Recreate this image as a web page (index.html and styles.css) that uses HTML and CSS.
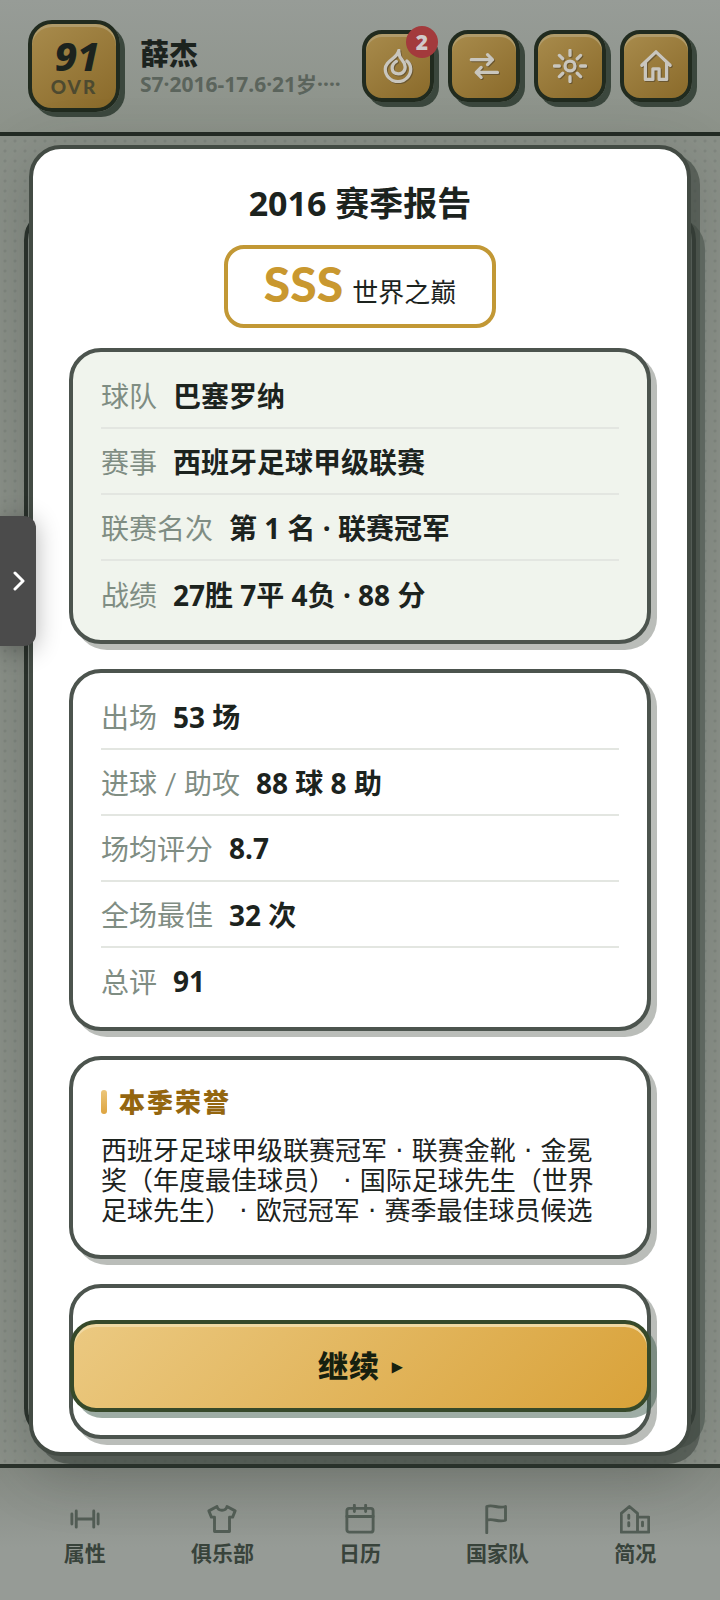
FILE: index.html
```html
<!DOCTYPE html>
<html lang="zh-CN">
<head>
  <meta charset="UTF-8" />
  <meta name="viewport" content="width=device-width, initial-scale=1.0"/>
  <title>赛季报告</title>
  <link rel="stylesheet" href="styles.css">
</head>
<body>
  <header class="topbar">
    <div class="ovr">
      <strong>91</strong>
      <span>OVR</span>
    </div>
    <div class="player">
      <h1>薛杰</h1>
      <p>S7·2016-17.6·21岁····</p>
    </div>
    <div class="actions">
      <button class="icon-btn" type="button" aria-label="热门">
        <svg viewBox="0 0 24 24"><path d="M18.300 8.500C20 10 21 12 21 14.200a9 8.800 0 0 1-18 0C3 8 11.500 7 12.600 1C12.300 4.500 13.500 6.300 15.200 8.200C18.500 12 17.200 17.500 12.200 17.500C7 17.500 6.500 11.500 10.800 8.800"/></svg>
        <span class="badge">2</span>
      </button>
      <button class="icon-btn" type="button" aria-label="转会">
        <svg viewBox="0 0 24 24"><path d="M3 7.500h15M14.500 4l3.500 3.500-3.500 3.500M21.500 16.500H6.500M10 13l-3.500 3.500L10 20"/></svg>
      </button>
      <button class="icon-btn" type="button" aria-label="主题">
        <svg viewBox="0 0 24 24"><circle cx="12" cy="12" r="3.500"/><path d="M12 1v3.500M12 19.500V23M1 12h3.500M19.500 12H23M4.500 4.500l2.400 2.400M17.100 17.100l2.400 2.400M4.500 19.500l2.400-2.400M17.100 6.900l2.400-2.400"/></svg>
      </button>
      <button class="icon-btn" type="button" aria-label="首页">
        <svg viewBox="0 0 24 24"><path d="M2 11.500L12 2l10 9.500M4.500 9.500V21.500h5.300V14h4.400v7.500h5.300V9.500"/></svg>
      </button>
    </div>
  </header>

  <main class="stage">
    <div class="panel"></div>
  </main>

  <nav class="tabbar">
    <a href="#attr">
      <svg viewBox="0 0 24 24"><path d="M1.500 8v8M5 5.500v13M5 12h14M19 5.500v13M22.500 8v8"/></svg>
      属性
    </a>
    <a href="#club">
      <svg viewBox="0 0 24 24"><path d="M8 2L1.500 5.500l2 5H6V22h12V10.500h2.500l2-5L16 2c-1 4-7 4-8 0z"/></svg>
      俱乐部
    </a>
    <a href="#calendar">
      <svg viewBox="0 0 24 24"><rect x="1.500" y="3.500" width="21" height="19" rx="2"/><path d="M1.500 10h21M7.500 1v5M16.500 1v5"/></svg>
      日历
    </a>
    <a href="#national">
      <svg viewBox="0 0 24 24"><path d="M3 23V2c5-2 9 2 15 0v11c-6 2-10-2-15 0"/></svg>
      国家队
    </a>
    <a href="#profile">
      <svg viewBox="0 0 24 24"><path d="M1 22.500V7.500l6.500-5.500L14 7.500v15zM14 10.500h9v12h-9M7 9v2.500M7 15v2.500M18 14.500v3"/></svg>
      简况
    </a>
  </nav>

  <div class="overlay">
    <section class="modal" role="dialog" aria-labelledby="report-title">
      <h2 id="report-title">2016 赛季报告</h2>
      <div class="grade"><strong>SSS</strong> <span>世界之巅</span></div>

      <dl class="card tinted">
        <div><dt>球队</dt><dd>巴塞罗纳</dd></div>
        <div><dt>赛事</dt><dd>西班牙足球甲级联赛</dd></div>
        <div><dt>联赛名次</dt><dd>第 1 名 · 联赛冠军</dd></div>
        <div><dt>战绩</dt><dd>27胜 7平 4负 · 88 分</dd></div>
      </dl>

      <dl class="card">
        <div><dt>出场</dt><dd>53 场</dd></div>
        <div><dt>进球 / 助攻</dt><dd>88 球 8 助</dd></div>
        <div><dt>场均评分</dt><dd>8.7</dd></div>
        <div><dt>全场最佳</dt><dd>32 次</dd></div>
        <div><dt>总评</dt><dd>91</dd></div>
      </dl>

      <div class="card honors">
        <h3>本季荣誉</h3>
        <p>西班牙足球甲级联赛冠军 · 联赛金靴 · 金冕奖（年度最佳球员） · 国际足球先生（世界足球先生） · 欧冠冠军 · 赛季最佳球员候选</p>
      </div>

      <div class="card footer">
        <button class="continue" type="button">继续 <span>▸</span></button>
      </div>
    </section>
  </div>

  <button class="drawer" type="button" aria-label="展开">
    <svg viewBox="0 0 12 20"><path d="M2 2l8 8-8 8"/></svg>
  </button>
</body>
</html>
```

FILE: styles.css
```css
* { box-sizing: border-box; }

body {
  margin: 0;
  min-height: 100vh;
  display: flex;
  flex-direction: column;
  background-color: #8b9189;
  color: #1c231e;
  font-family: "Noto Sans", "Noto Sans CJK SC", sans-serif;
}

h1, h2, h3, p, dl, dd { margin: 0; }

button { font-family: inherit; cursor: pointer; }

svg {
  display: block;
  fill: none;
  stroke: currentColor;
  stroke-width: 2.3;
  stroke-linecap: round;
  stroke-linejoin: round;
}

/* header */
.topbar {
  display: flex;
  align-items: center;
  height: 136px;
  padding: 0 28px;
  border-bottom: 4px solid #232b24;
  background: linear-gradient(#979c97, #8c9289);
}

.ovr {
  flex: none;
  width: 92px;
  height: 92px;
  display: flex;
  flex-direction: column;
  align-items: center;
  justify-content: center;
  border: 4px solid #212b1f;
  border-radius: 24px;
  background: linear-gradient(145deg, #a88b4c, #8a6a2a);
  box-shadow: 5px 5px 0 #3b473d, inset 0 3px 0 #b09b6a;
}

.ovr strong {
  padding-left: 6px;
  font-size: 40px;
  font-weight: 800;
  font-style: italic;
  line-height: 42px;
}

.ovr span {
  color: #4d4a30;
  font-family: Lato, sans-serif;
  font-size: 19px;
  font-weight: 900;
  letter-spacing: 2px;
  line-height: 20px;
}

.player {
  flex: 1;
  min-width: 0;
  padding-left: 20px;
}

.player h1 {
  font-size: 29px;
  font-weight: 900;
  line-height: 36px;
}

.player p {
  color: #5b645c;
  font-size: 21px;
  font-weight: 700;
  line-height: 24px;
  white-space: nowrap;
}

.actions { display: flex; gap: 14px; }

.icon-btn {
  position: relative;
  width: 72px;
  height: 72px;
  padding: 0;
  display: grid;
  place-items: center;
  border: 4px solid #212b1f;
  border-radius: 20px;
  background: linear-gradient(145deg, #a88b4c, #8a6a2a);
  box-shadow: 5px 5px 0 #3b473d, inset 0 3px 0 #b09b6a;
  color: #c9c6be;
}

.icon-btn svg {
  width: 34px;
  height: 34px;
  filter: drop-shadow(1px 1px 0 #6b5730);
}

.badge {
  position: absolute;
  top: -8px;
  right: -8px;
  width: 32px;
  height: 32px;
  border-radius: 50%;
  background-color: #a33a3c;
  color: #d0caca;
  font-size: 21px;
  font-weight: 900;
  line-height: 32px;
  text-align: center;
}

/* page behind the report */
.stage {
  flex: 1;
  display: flex;
  padding: 72px 24px 24px;
  background: radial-gradient(circle, #80877f 1px, transparent 2px) 0 0 / 10px 10px;
}

.panel {
  flex: 1;
  border: 4px solid #2a322c;
  border-radius: 32px;
  background-color: #878e86;
  box-shadow: 9px 9px 0 #656e66;
}

.tabbar {
  display: flex;
  justify-content: space-around;
  height: 136px;
  padding: 36px 16px 0;
  border-top: 4px solid #2a322b;
  background: linear-gradient(#868b84, #969b96 60%);
}

.tabbar a {
  flex: 1;
  display: flex;
  flex-direction: column;
  align-items: center;
  gap: 4px;
  color: #38433b;
  font-size: 21px;
  font-weight: 700;
  line-height: 30px;
  text-decoration: none;
}

.tabbar svg {
  width: 30px;
  height: 30px;
  color: #535e56;
}

/* report */
.overlay {
  position: absolute;
  inset: 0;
  display: flex;
  align-items: center;
  padding: 0 29px;
}

.modal {
  flex: 1;
  display: flex;
  flex-direction: column;
  gap: 25px;
  padding: 34px 36px 13px;
  border: 4px solid #434b44;
  border-radius: 32px;
  background-color: #fff;
  box-shadow: 9px 8px 0 rgba(60, 69, 61, 0.6), 0 16px 60px rgba(40, 48, 42, 0.3);
}

.modal h2 {
  font-size: 34px;
  line-height: 40px;
  text-align: center;
}

.grade {
  align-self: center;
  display: flex;
  align-items: baseline;
  gap: 9px;
  height: 83px;
  margin: -3px 0 -5px;
  padding: 3px 36px 0;
  border: 4px solid #c29835;
  border-radius: 20px;
  font-size: 26px;
  line-height: 64px;
}

.grade strong {
  color: #c9982f;
  font-family: Lato, sans-serif;
  font-size: 48px;
  font-weight: 900;
}

.card {
  padding: 11px 28px 13px;
  border: 4px solid #4c544e;
  border-radius: 32px;
  background-color: #fff;
  box-shadow: 6px 6px 0 #babdb9;
}

.card.tinted { background-color: #f0f4ed; }

.card div {
  display: flex;
  align-items: center;
  gap: 16px;
  height: 66px;
  border-bottom: 2px solid #e3e6e1;
}

.card div:last-child { border-bottom: 0; }

.card dt {
  color: #7f8d83;
  font-family: Lato, "Noto Sans CJK SC", sans-serif;
  font-size: 28px;
}

.card dd {
  font-size: 28px;
  font-weight: 700;
}

.card.honors { padding: 25px 28px 29px; }

.honors h3 {
  display: flex;
  align-items: center;
  gap: 12px;
  margin-bottom: 17px;
  color: #94660f;
  font-size: 26px;
  font-weight: 900;
  letter-spacing: 2px;
  line-height: 34px;
}

.honors h3::before {
  content: "";
  width: 6px;
  height: 24px;
  border-radius: 3px;
  background: linear-gradient(#ecc67a, #dda440);
}

.honors p {
  padding-right: 16px;
  font-family: "DejaVu Sans", "Noto Sans CJK SC", sans-serif;
  font-size: 26px;
  line-height: 30px;
}

.card.footer { padding: 32px 0 23px; }

.continue {
  display: flex;
  align-items: center;
  justify-content: center;
  gap: 12px;
  width: calc(100% + 7px);
  height: 92px;
  margin: 0 -4px 0 -3px;
  border: 4px solid #36492a;
  border-radius: 26px;
  background: linear-gradient(135deg, #ebc981, #d9a239);
  box-shadow: 6px 6px 0 rgba(61, 92, 76, 0.5), inset 0 3px 0 #f0d9a4;
  color: #16200f;
  font-size: 30px;
  font-weight: 900;
  letter-spacing: 1px;
  line-height: 40px;
}

.continue span { font-size: 20px; }

.drawer {
  position: fixed;
  top: 516px;
  left: 0;
  width: 36px;
  height: 130px;
  padding: 0 0 0 13px;
  border: 0;
  border-radius: 0 12px 12px 0;
  background-color: #4b4b4b;
  box-shadow: 0 4px 24px rgba(0, 0, 0, 0.3);
  color: #fff;
}

.drawer svg { width: 12px; height: 20px; stroke-width: 3; }
```
